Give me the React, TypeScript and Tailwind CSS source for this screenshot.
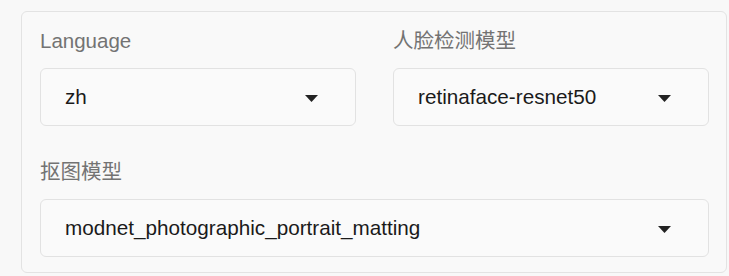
import React from "react";

const font = { fontFamily: '"Liberation Sans", "Noto Sans CJK SC", sans-serif' };

const Caret = () => (
  <svg width="13" height="7" viewBox="0 0 13 7" className="mt-[3px] shrink-0">
    <path d="M0 0 H13 L6.5 7 Z" fill="#222222" />
  </svg>
);

const SelectBox: React.FC<{ value: string }> = ({ value }) => (
  <div className="h-[58px] rounded-[6px] border border-[#e2e2e2] bg-[#fafafa] flex items-center justify-between pl-[24px] pr-[37px]">
    <span className="text-[20.7px] text-[#1a1a1a] leading-none">{value}</span>
    <Caret />
  </div>
);

const Field: React.FC<{ label: string; value: string; className?: string }> = ({ label, value, className }) => (
  <div className={className}>
    <div className="text-[20.5px] leading-[28px] text-[#737373] mb-[13px]">{label}</div>
    <SelectBox value={value} />
  </div>
);

export default function App() {
  return (
    <div className="w-[729px] h-[276px] bg-[#f8f8f8] pt-[11px] pl-[21px] pr-[2px]" style={font}>
      <div className="relative rounded-[6px] border border-[#e3e3e3] bg-[#f9f9f9] pt-[15px] pb-[15px] pl-[18px] pr-[17px]">
        <div className="grid grid-cols-2 gap-x-[37px] gap-y-[32px]">
          <Field label="Language" value="zh" />
          <Field label="人脸检测模型" value="retinaface-resnet50" />
          <Field label="抠图模型" value="modnet_photographic_portrait_matting" className="col-span-2" />
        </div>
        <div className="pointer-events-none absolute left-[435px] top-[72px] -rotate-[28deg] text-[30px] font-bold italic text-black/[0.02] select-none">
          ModelScope
        </div>
      </div>
    </div>
  );
}
